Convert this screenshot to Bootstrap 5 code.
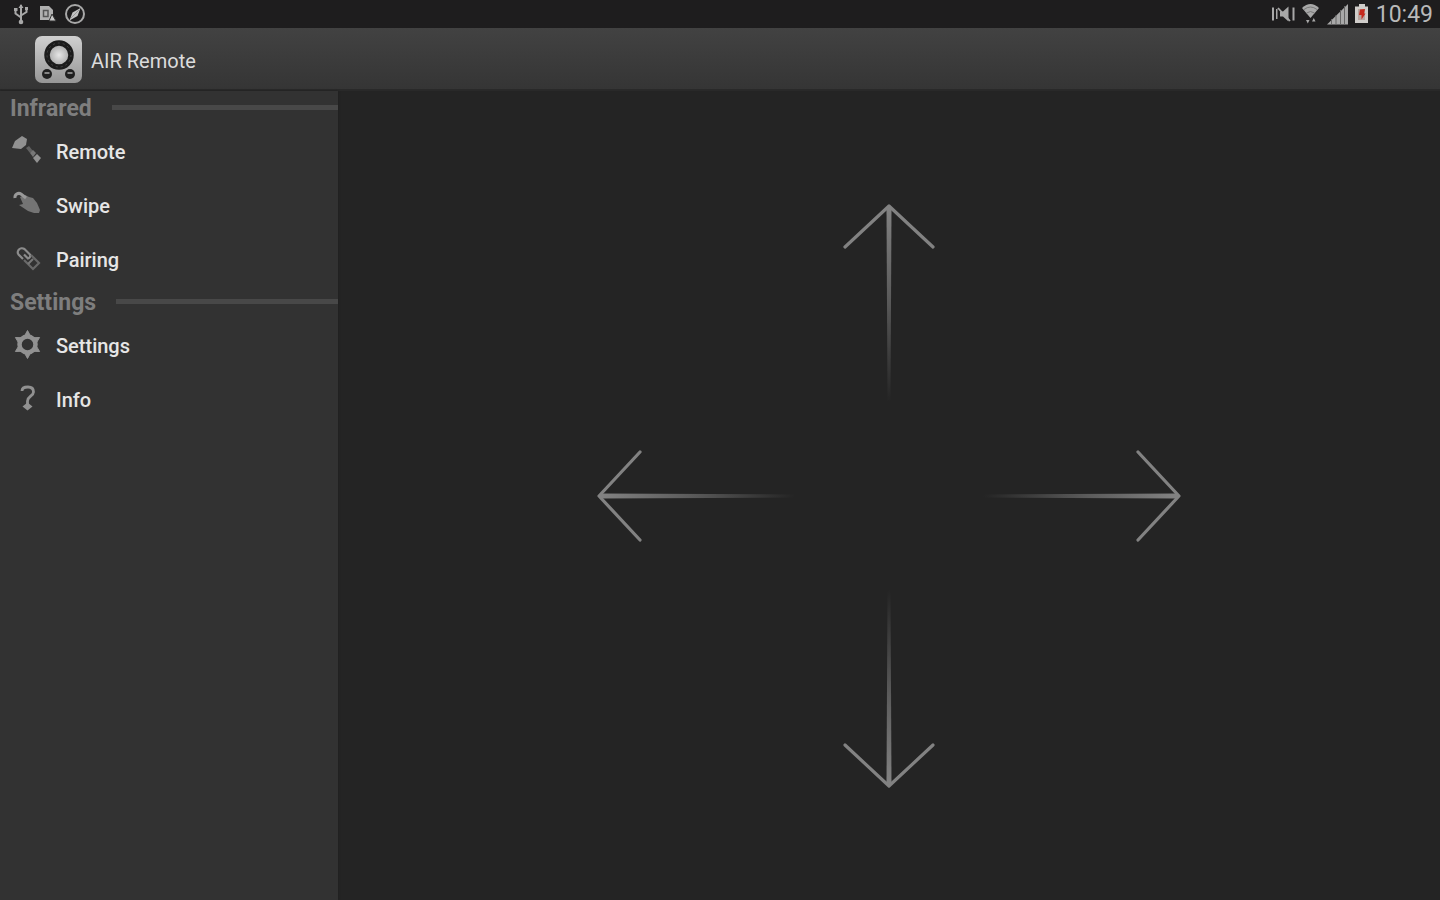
<!DOCTYPE html>
<html lang="en" data-bs-theme="dark">
<head>
<meta charset="utf-8">
<meta name="viewport" content="width=device-width, initial-scale=1">
<title>AIR Remote</title>
<link href="https://cdn.jsdelivr.net/npm/bootstrap@5.3.0/dist/css/bootstrap.min.css" rel="stylesheet">
<style>
body { background: #242424; color: #e4e4e4; font-family: Roboto, "Liberation Sans", sans-serif; }
svg { display: block; flex: none; }
.status-bar { height: 28px; background: #1e1d1e; padding: 0 7px 0 12px; color: #b9b9b9; }
.clock { font-size: 23px; line-height: 28px; margin-left: 7px; padding-top: 2px; }
.app-bar { height: 63px; background: linear-gradient(#424242, #353535); border-bottom: 2px solid #292929; padding: 0 34px; gap: 8px; }
.app-title { font-size: 20px; line-height: 24px; color: #dcdcdc; padding-top: 4px; }
.side-menu { width: 338px; background: #323232; flex: none; box-shadow: 0 0 2px #1c1c1c; }
.side-heading { height: 32px; padding-left: 10px; gap: 20px; }
.side-heading h2 { font-size: 23px; line-height: 32px; font-weight: 700; margin: 0; padding-top: 4px; color: #7e7e7e; }
.side-heading .rule { height: 5px; background: #484848; }
.side-link { height: 54px; padding: 2px 0 0 12px; gap: 12px; color: #e6e6e6; font-size: 20px; line-height: 24px; font-weight: 500; text-decoration: none; }
.side-link span { padding-top: 2px; }
.side-link:hover { background: #3c3c3c; color: #fff; }
.pad { display: grid; grid-template: 200px 184px 200px / 200px 184px 200px; }
.pad .btn { padding: 0; border: 0; border-radius: 0; display: flex; align-items: center; justify-content: center; }
.up { grid-area: 1 / 2; } .left { grid-area: 2 / 1; } .right { grid-area: 2 / 3; } .down { grid-area: 3 / 2; }
.left svg { transform: rotate(-90deg); } .right svg { transform: rotate(90deg); } .down svg { transform: rotate(180deg); }
</style>
</head>
<body class="min-vh-100 d-flex flex-column">
<svg width="0" height="0" class="position-absolute" aria-hidden="true">
  <defs>
    <linearGradient id="fade" x1="0" y1="0" x2="0" y2="1"><stop offset="0" stop-color="#828282"/><stop offset=".45" stop-color="#5c5c5c"/><stop offset="1" stop-color="#242424"/></linearGradient>
    <linearGradient id="metal" x1="0" y1="0" x2="0" y2="1"><stop offset="0" stop-color="#d0d0d0"/><stop offset="1" stop-color="#969696"/></linearGradient>
    <radialGradient id="lens"><stop offset="0" stop-color="#e6e6e6"/><stop offset="1" stop-color="#a2a2a2"/></radialGradient>
    <symbol id="arrow" viewBox="0 0 96 200"><path d="M45.500 4h5l-1 194h-3z" fill="url(#fade)"/><path d="M4 43 48 2l44 41" fill="none" stroke="#828282" stroke-width="3.200" stroke-linecap="round" stroke-linejoin="round"/></symbol>
  </defs>
</svg>

<div class="status-bar d-flex align-items-center justify-content-between">
  <div class="d-flex align-items-center">
    <svg width="78" height="28" viewBox="12 0 78 28" fill="none" stroke="#a8a8a8" stroke-width="2" aria-hidden="true">
      <path d="M21 5v18M15.500 9v4.500L21 17.500M26.500 8v4L21 15.500"/><path d="M18.500 8 21 4l2.500 4zM14 8h3.500v3H14zM25 7h3v3h-3z" fill="#a8a8a8" stroke="none"/><circle cx="21" cy="22" r="2.300" fill="#a8a8a8" stroke="none"/>
      <path d="M40 6h9l4 4v10H40z" fill="#b0b0b0" stroke="none"/><path d="M43.500 10.500h4.500v6h-4.500z" stroke="#555" stroke-width="1.500"/><path d="m52 14 4 7h-7z" fill="#c8c8c8" stroke="#333" stroke-width="1"/>
      <circle cx="75" cy="14" r="9"/><path d="m80.500 8-3 8-8 4.500 3-8z" fill="#c4c4c4" stroke="none"/><path d="m71 18 8-8" stroke="#999" stroke-width="1"/>
    </svg>
  </div>
  <div class="d-flex align-items-center">
    <svg width="98" height="28" viewBox="1270 0 98 28" fill="#a8a8a8" aria-hidden="true">
      <path d="M1271 7.500h2v13h-2zM1275 9h1.500v10h-1.500zM1291.500 7.500h2v13h-2zM1279 11.500h3l5.500-5v15l-5.500-5h-3z"/><path d="m1277 8 12 13" stroke="#a8a8a8" stroke-width="1.800"/>
      <path d="M1301 8q8.500-8 17 0l-8.500 10z"/><path d="M1303 9.500q6.500-5 13 0M1305.500 13q4-3 8 0" fill="none" stroke="#777"/><path d="M1305 20h3.500l-1.700 3.500zM1311 21.500h3.500l-1.700-3.500z"/>
      <path d="M1326 24.500 1347 4v20.500z"/><path d="M1330.500 19v6M1335 15v10M1339.500 10v15M1343.500 6v19" stroke="#666" fill="none"/>
      <path d="M1358 4h6v2.500h3V23h-13V6.500h4z" fill="#d0cdca"/><path d="M1357 9h7v11h-7z" fill="#b9a49e"/><path d="m1359 9.500 5-.5-1 4.500h1.500l-4 6v-4.500h-2.500z" fill="#c5281c"/>
    </svg>
    <span class="clock">10:49</span>
  </div>
</div>

<header class="app-bar d-flex align-items-center">
  <svg width="49" height="50" viewBox="0 0 49 50" aria-hidden="true">
    <rect x="1" y="2" width="47" height="47" rx="7" fill="url(#metal)"/>
    <circle cx="25" cy="21" r="12" fill="url(#lens)" stroke="#1c1c1c" stroke-width="5.500"/><circle cx="25" cy="21" r="12" fill="none" stroke="#454545" stroke-dasharray="2 3"/>
    <circle cx="13" cy="40" r="5" fill="#202020"/><circle cx="36" cy="40" r="5" fill="#202020"/><path d="M10.500 39h5M33.500 39h5" stroke="#858585" stroke-width="2"/>
  </svg>
  <h1 class="app-title fw-normal mb-0">AIR Remote</h1>
</header>

<div class="d-flex flex-grow-1">
  <nav class="side-menu" aria-label="Main">
    <div class="side-heading d-flex align-items-center"><h2>Infrared</h2><span class="rule flex-grow-1"></span></div>
    <a class="side-link d-flex align-items-center" href="#">
      <svg width="32" height="32" viewBox="0 0 32 32" fill="#919191" aria-hidden="true"><path d="M0 13 3 6l7-5 5 3-1 6-5 4z"/><path d="m14 13 3-2 4 5-3 2z" fill="#606060"/><path d="m18 18 3-3 3 3-3 4z" fill="#777"/><path d="m21 23 4-4 4 4-4 5z"/></svg><span>Remote</span></a>
    <a class="side-link d-flex align-items-center" href="#">
      <svg width="32" height="32" viewBox="0 0 32 32" fill="#747474" aria-hidden="true"><path d="M8 8l5-2 4 2 4 1 4 5 3 7-1 3h-5l-6-2-6-4-3-2 4-1z"/><path d="M3 9a4 4 0 0 1 6-4l5 4" fill="none" stroke="#999" stroke-width="3"/></svg><span>Swipe</span></a>
    <a class="side-link d-flex align-items-center" href="#">
      <svg width="32" height="32" viewBox="0 0 32 32" fill="none" stroke="#8c8c8c" stroke-width="2.200" aria-hidden="true"><path d="M11 16 6.500 11.500a4 4 0 0 1 0-4.500 4.500 4.500 0 0 1 6-1L18 11.500a3 3 0 0 1-2 4l-4-4"/><path d="m12 17 9 9 6-6-8-8" stroke="#686868"/><path d="m16 21 5-5" stroke="#777"/></svg><span>Pairing</span></a>
    <div class="side-heading d-flex align-items-center"><h2>Settings</h2><span class="rule flex-grow-1"></span></div>
    <a class="side-link d-flex align-items-center" href="#">
      <svg width="32" height="32" viewBox="0 0 32 32" fill="none" stroke="#919191" aria-hidden="true"><circle cx="15.500" cy="15.500" r="8" stroke-width="4.500"/><path d="m15.500 1.500 3 5.500h-6zM15.500 29.500l3-5.500h-6zM3.400 8.500l6.200.2-3 5.100zM27.600 8.500l-6.200.2 3 5.100zM3.400 22.500l6.200-.2-3-5.100zM27.600 22.500l-6.200-.2 3-5.100z" fill="#919191" stroke-width="1"/></svg><span>Settings</span></a>
    <a class="side-link d-flex align-items-center" href="#">
      <svg width="32" height="32" viewBox="0 0 32 32" fill="none" stroke="#919191" stroke-width="2.800" aria-hidden="true"><path d="M10 8q0-4 6-4 5.500 0 5.500 5c0 4-6 4.500-6 9v4"/><path d="m15.500 19.500 5 4-5 4-5-4z" fill="#919191" stroke="none"/></svg><span>Info</span></a>
  </nav>
  <main class="flex-grow-1 d-flex align-items-center justify-content-center">
    <div class="pad">
      <button class="btn up" type="button" aria-label="Up"><svg width="96" height="200"><use href="#arrow"/></svg></button>
      <button class="btn left" type="button" aria-label="Left"><svg width="96" height="200"><use href="#arrow"/></svg></button>
      <button class="btn right" type="button" aria-label="Right"><svg width="96" height="200"><use href="#arrow"/></svg></button>
      <button class="btn down" type="button" aria-label="Down"><svg width="96" height="200"><use href="#arrow"/></svg></button>
    </div>
  </main>
</div>
<script src="https://cdn.jsdelivr.net/npm/bootstrap@5.3.0/dist/js/bootstrap.bundle.min.js"></script>
</body>
</html>
